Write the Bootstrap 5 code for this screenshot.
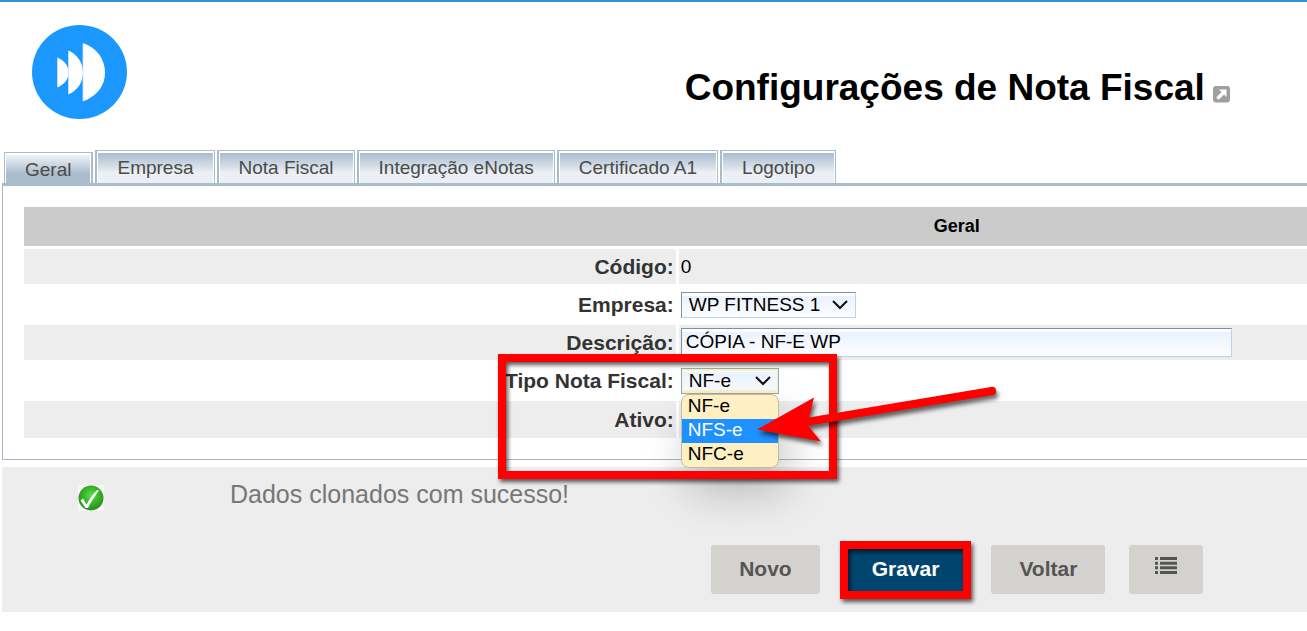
<!DOCTYPE html>
<html lang="pt-BR">
<head>
<meta charset="utf-8">
<meta name="viewport" content="width=device-width, initial-scale=1">
<title>Configurações de Nota Fiscal</title>
<link href="https://cdn.jsdelivr.net/npm/bootstrap@5.3.0/dist/css/bootstrap.min.css" rel="stylesheet">
<style>
  body { font-family: "Liberation Sans", Arial, sans-serif; font-size: 19px; line-height: 24px; color: #000; background: #fff; border-top: 2px solid #3295d2; }
  .page-sheet { padding-left: 2px; }
  .center-zone { padding-left: 46.4%; }
  .brand-bar { height: 148px; }
  .brand-logo { left: 30px; top: 23px; }
  .title-row { padding-top: 64px; }
  .page-title { font-size: 37px; line-height: 44px; font-weight: 700; }
  .title-link { margin-top: 12px; }
  .tab-strip { border-bottom: 3px solid #a9bccd; padding-left: 2px; gap: 2px; }
  .tab-strip .nav-link { color: #4a4a4a; padding: 2px 1px 0; line-height: 24px; border: 1px solid #a9bccd; border-left-width: 2px; border-bottom: 0; background: linear-gradient(#a9bccf, #dbe2ea 50%, #ecf0f4 65%) content-box, #fff; }
  .tab-strip .nav-link span { display: block; padding: 3px 19px; }
  .tab-strip .nav-link.active { padding-bottom: 0; background: linear-gradient(#f0f3f5, #c3cfdb 45%, #abbccd 65%) content-box, #fff; border-left-width: 1px; border-right-width: 2px; }
  .tab-strip .nav-link.active span { padding-bottom: 1px; }
  .sheet-panel { border: 1px solid #a9b6c6; border-top: 0; border-right: 0; padding: 21px 0 21px 21px; }
  .form-grid { display: grid; gap: 3px; }
  .grid-head { background: #cbcbcb; font-size: 18px; font-weight: 700; line-height: 39px; padding-left: 45.4%; }
  .form-line { display: grid; grid-template-columns: 50.8% 1fr; column-gap: 3px; min-height: 35px; }
  .form-line.tall { min-height: 37px; }
  .form-line > * { display: flex; align-items: center; padding: 0 2px; }
  .form-line.striped > * { background: #ededed; }
  .line-label { justify-content: flex-end; font-size: 21px; font-weight: 700; color: #333; }
  .field { border: 1px solid #bcd2ee; border-top-color: #7f8fa9; border-left-color: #7f8fa9; padding: 1px 4px; color: #000; background: linear-gradient(#eaf2fe, #fff) no-repeat 0 3px / 100% 100%, #fff; }
  .field-text { width: 551px; height: 29px; padding-bottom: 3px; }
  .field-select { appearance: none; height: 26px; line-height: 24px; padding: 0 30px 0 7px;
    background: url("data:image/svg+xml,%3Csvg xmlns='http://www.w3.org/2000/svg' width='16' height='10'%3E%3Cpath d='M1 1l7 7 7-7' fill='none' stroke='%23111' stroke-width='2'/%3E%3C/svg%3E") no-repeat right 7px center, linear-gradient(#eaf2fe, #fff) no-repeat 0 3px / 100% 100%, #fff; }
  .field-company { width: 175px; }
  .field-kind { width: 98px; border-color: #8eadb8; box-shadow: inset 1px 2px #fff0c4, inset -1px -3px #fff0c4; outline: 0; }
  .kind-menu { left: 2px; top: 31px; width: 98px; z-index: 3; border: 1px solid #c0bba9; border-radius: 8px; background: #fff0c4; overflow: hidden; box-shadow: 8px 24px 44px rgba(0,0,0,.22); }
  .kind-menu li { padding-left: 6px; line-height: 22px; height: 24px; }
  .kind-menu li.picked { background: #1e90ff; color: #fff; }
  .callout-box { border: 8px solid #f00; filter: drop-shadow(2px 3px 2px rgba(0,0,0,.65)); z-index: 4; pointer-events: none; }
  .callout-kind { left: -181px; top: -9px; width: 339px; height: 125px; }
  .callout-save { inset: -4px -4px -5px; }
  .callout-arrow { left: 73px; top: 12px; z-index: 5; overflow: visible; filter: drop-shadow(2px 4px 2px rgba(0,0,0,.6)); pointer-events: none; }
  .result-area { background: #ededed; margin-top: 7px; height: 145px; padding: 14px 0 18px; }
  .result-icon { margin: 4px 126px 0 76px; }
  .result-text { font-size: 25px; line-height: 26px; color: #777; }
  .btn-flat { height: 49px; padding: 0 28px 2px; border: 0; border-radius: 3px; font-size: 21px; font-weight: 700; background: #d4d2cf; color: #555; }
  .btn-flat.btn-save { background: #00456f; color: #fff; }
  .btn-flat.btn-list { padding: 0 26px 12px; line-height: 1; }
</style>
</head>
<body>
<div class="page-sheet">
  <header class="brand-bar center-zone position-relative">
    <svg class="brand-logo position-absolute" width="95" height="94" viewBox="0 0 95 94" aria-label="Logo" role="img">
      <ellipse cx="47.5" cy="47" rx="47.5" ry="47" fill="#1a98ff"/>
      <path d="M25.500 32.500C33 36 36.500 41 36.500 47.500S33 59 25.500 62.500ZM36.500 25.500C46 30 51 38 51 47.500S46 65 36.500 69.500ZM51 18C65 23 73 34 73 47.500S65 71 51 76.500Z" fill="#fff"/>
      <path d="M36.500 26v43M51 19v57M25.500 33v29" stroke="#c5e3ff" stroke-width=".8"/>
    </svg>
    <div class="title-row d-flex align-items-center justify-content-center gap-2">
      <h1 class="page-title m-0">Configurações de Nota Fiscal</h1>
      <a href="#" class="title-link d-flex" aria-label="Abrir em nova janela">
        <svg width="17" height="17" viewBox="0 0 17 17"><rect width="17" height="16.500" rx="3" fill="#a0a0a0"/><path d="M6 3.500h7.500V11l-2.500-2.500-5.500 5.200-2.300-2.300L8.600 6.100z" fill="#fff"/></svg>
      </a>
    </div>
  </header>

  <nav class="nav tab-strip align-items-end" aria-label="Seções">
    <a class="nav-link active" href="#geral" aria-current="page"><span>Geral</span></a>
    <a class="nav-link" href="#empresa"><span>Empresa</span></a>
    <a class="nav-link" href="#nota"><span>Nota Fiscal</span></a>
    <a class="nav-link" href="#enotas"><span>Integração eNotas</span></a>
    <a class="nav-link" href="#certificado"><span>Certificado A1</span></a>
    <a class="nav-link" href="#logotipo"><span>Logotipo</span></a>
  </nav>

  <main>
    <section class="sheet-panel" id="geral">
      <div class="form-grid">
        <h2 class="grid-head text-center m-0">Geral</h2>
        <div class="form-line striped">
          <div class="line-label">Código:</div>
          <div>0</div>
        </div>
        <div class="form-line">
          <label class="line-label" for="company">Empresa:</label>
          <div><select id="company" class="field field-select field-company"><option>WP FITNESS 1</option></select></div>
        </div>
        <div class="form-line striped">
          <label class="line-label" for="description">Descrição:</label>
          <div><input id="description" class="field field-text" type="text" value="CÓPIA - NF-E WP"></div>
        </div>
        <div class="form-line">
          <label class="line-label" for="kind">Tipo Nota Fiscal:</label>
          <div class="position-relative">
            <select id="kind" class="field field-select field-kind"><option>NF-e</option><option>NFS-e</option><option>NFC-e</option></select>
            <ul class="kind-menu list-unstyled position-absolute m-0" role="listbox" aria-label="Tipo Nota Fiscal">
              <li role="option">NF-e</li>
              <li role="option" class="picked" aria-selected="true">NFS-e</li>
              <li role="option">NFC-e</li>
            </ul>
            <div class="callout-box callout-kind position-absolute"></div>
            <svg class="callout-arrow position-absolute" width="246" height="70" viewBox="0 0 246 70" aria-hidden="true">
              <path d="M5 54.500L62 22.500 57 42.500 239 12a4 4 0 0 1 2 8L56 50.700 69 66.500Z" fill="#f00"/>
            </svg>
          </div>
        </div>
        <div class="form-line striped tall">
          <div class="line-label">Ativo:</div>
          <div></div>
        </div>
      </div>
    </section>

    <section class="result-area d-flex flex-column justify-content-between">
      <div class="d-flex align-items-start" role="status">
        <svg class="result-icon" width="26" height="26" viewBox="0 0 26 26" aria-hidden="true">
          <defs><radialGradient id="ok" cx=".5" cy=".4" r=".6"><stop offset="0" stop-color="#5be04a"/><stop offset=".6" stop-color="#35ae24"/><stop offset="1" stop-color="#2b8a20"/></radialGradient></defs>
          <rect width="26" height="26" fill="#f7f7f7"/><circle cx="13" cy="13" r="12.500" fill="url(#ok)"/>
          <path d="M2.500 15.500l2.500-2 3.500 6C11.500 14 15 9 19 5l2 .5C16.500 11.500 13 17 10 23H7.500z" fill="#fff"/>
        </svg>
        <p class="result-text m-0">Dados clonados com sucesso!</p>
      </div>
      <div class="center-zone d-flex justify-content-center gap-4">
        <button type="button" class="btn btn-flat">Novo</button>
        <div class="position-relative">
          <button type="submit" class="btn btn-flat btn-save">Gravar</button>
          <div class="callout-box callout-save position-absolute"></div>
        </div>
        <button type="button" class="btn btn-flat">Voltar</button>
        <button type="button" class="btn btn-flat btn-list" aria-label="Listar">
          <svg width="22" height="17" viewBox="0 0 22 17" fill="#555"><path d="M0 0h3v3H0zM5 0h17v3H5zM0 4.700h3v3H0zM5 4.700h17v3H5zM0 9.300h3v3H0zM5 9.300h17v3H5zM0 14h3v3H0zM5 14h17v3H5z"/></svg>
        </button>
      </div>
    </section>
  </main>
</div>
<script src="https://cdn.jsdelivr.net/npm/bootstrap@5.3.0/dist/js/bootstrap.bundle.min.js"></script>
</body>
</html>
